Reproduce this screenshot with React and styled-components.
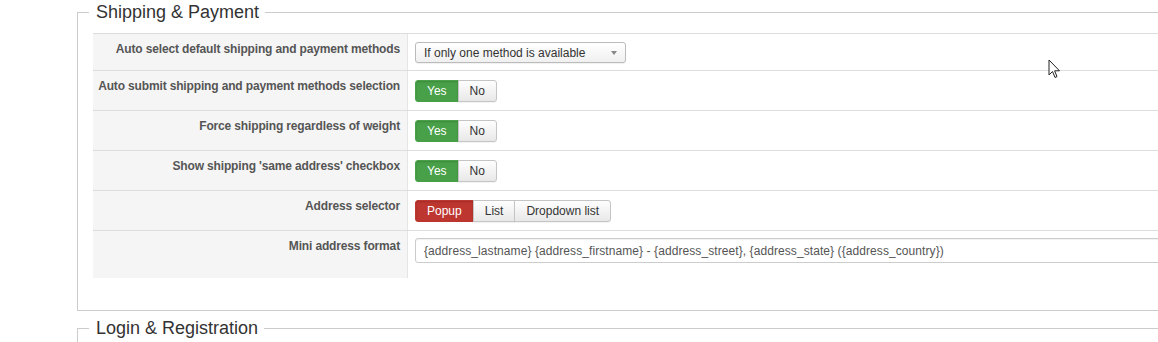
import styled, { createGlobalStyle } from "styled-components";

const Global = createGlobalStyle`
    html, body {
        margin: 0;
        padding: 0;
        background: #fff;
        overflow: hidden;
    }
    body {
        font-family: "Liberation Sans", Arial, sans-serif;
        font-size: 12px;
        color: #333;
    }
`

const Page = styled.div`
    position: relative;
    width: 1158px;
    height: 342px;
    overflow: hidden;
    padding-left: 77px;
    box-sizing: border-box;
`

const Fieldset = styled.fieldset`
    width: 1200px;
    margin: 0 0 5px 0;
    padding: 0 0 32px 15px;
    border: 1px solid #ccc;
    border-right: none;
    box-sizing: border-box;
    min-width: 0;
`

const Legend = styled.legend`
    font-size: 18px;
    line-height: 24px;
    color: #333;
    padding: 0 6px 0 7px;
    margin-left: -4px;
`

const Table = styled.div`
    margin-top: 9px;
    width: 1100px;
`

const Row = styled.div`
    display: grid;
    grid-template-columns: 315px 1fr;
    height: ${p => p.$h}px;
    border-top: 1px solid #ddd;
    box-sizing: border-box;
`

const Label = styled.div`
    background: #f5f5f5;
    border-right: 1px solid #e5e5e5;
    text-align: right;
    font-weight: bold;
    color: #555;
    line-height: 18px;
    white-space: nowrap;
    letter-spacing: -0.15px;
    padding: 6px 7px 0 0;
`

const Value = styled.div`
    display: flex;
    align-items: flex-start;
    padding: ${p => p.$top}px 0 0 7px;
`

const Select = styled.div`
    width: 211px;
    height: 21px;
    box-sizing: border-box;
    border: 1px solid #bbb;
    border-radius: 3px;
    background: linear-gradient(#fff, #f0f0f0);
    display: flex;
    align-items: center;
    justify-content: space-between;
    padding: 0 8px;
    color: #333;
    box-shadow: 0 1px 1px rgba(0,0,0,0.06);
`

const Arrow = styled.span`
    width: 0;
    height: 0;
    border-left: 3px solid transparent;
    border-right: 3px solid transparent;
    border-top: 4px solid #888;
`

const Group = styled.div`
    display: flex;
`

const Btn = styled.div`
    height: 22px;
    box-sizing: border-box;
    padding: 0 ${p => p.$px || 11}px;
    display: flex;
    align-items: center;
    font-size: 12px;
    border: 1px solid ${p => p.$bg ? p.$bg : "#c5c5c5"};
    margin-left: -1px;
    color: ${p => p.$bg ? "#fff" : "#333"};
    background: ${p => p.$bg ? p.$bg : "linear-gradient(#fefefe, #e8e8e8)"};
    box-shadow: ${p => p.$bg ? "inset 0 1px 2px rgba(0,0,0,0.15)" : "0 1px 1px rgba(0,0,0,0.05)"};
    &:first-child {
        margin-left: 0;
        border-radius: 3px 0 0 3px;
    }
    &:last-child {
        border-radius: 0 3px 3px 0;
    }
`

const Input = styled.div`
    width: 900px;
    height: 25px;
    box-sizing: border-box;
    border: 1px solid #ccc;
    border-radius: 3px 0 0 3px;
    padding: 0 8px;
    display: flex;
    align-items: center;
    color: #555;
    letter-spacing: 0.08px;
    box-shadow: inset 0 1px 1px rgba(0,0,0,0.06);
`

const Cursor = styled.svg`
    position: absolute;
    left: 1048px;
    top: 59px;
`

function YesNo(){
    return <Group>
        <Btn $bg="#48a048" $px={11}>Yes</Btn>
        <Btn $px={11}>No</Btn>
    </Group>
}

export default function App(){
    return <>
        <Global />
        <Page>
            <Fieldset>
                <Legend>Shipping &amp; Payment</Legend>
                <Table>
                    <Row $h={37}>
                        <Label>Auto select default shipping and payment methods</Label>
                        <Value $top={8}>
                            <Select>If only one method is available<Arrow /></Select>
                        </Value>
                    </Row>
                    <Row $h={40}>
                        <Label>Auto submit shipping and payment methods selection</Label>
                        <Value $top={9}><YesNo /></Value>
                    </Row>
                    <Row $h={40}>
                        <Label>Force shipping regardless of weight</Label>
                        <Value $top={9}><YesNo /></Value>
                    </Row>
                    <Row $h={40}>
                        <Label>Show shipping 'same address' checkbox</Label>
                        <Value $top={9}><YesNo /></Value>
                    </Row>
                    <Row $h={40}>
                        <Label>Address selector</Label>
                        <Value $top={9}>
                            <Group>
                                <Btn $bg="#bd362f" $px={11}>Popup</Btn>
                                <Btn $px={11}>List</Btn>
                                <Btn $px={11}>Dropdown list</Btn>
                            </Group>
                        </Value>
                    </Row>
                    <Row $h={48}>
                        <Label>Mini address format</Label>
                        <Value $top={7}>
                            <Input>{"{address_lastname} {address_firstname} - {address_street}, {address_state} ({address_country})"}</Input>
                        </Value>
                    </Row>
                </Table>
            </Fieldset>
            <Fieldset>
                <Legend>Login &amp; Registration</Legend>
                <Table />
            </Fieldset>
            <Cursor width="14" height="22" viewBox="0 0 14 22">
                <path d="M1 1 L1 16 L4.5 12.5 L7 18.5 L9 17.6 L6.6 11.8 L11.5 11.8 Z" fill="#fff" stroke="#222" strokeWidth="1" strokeLinejoin="round" />
            </Cursor>
        </Page>
    </>
}
